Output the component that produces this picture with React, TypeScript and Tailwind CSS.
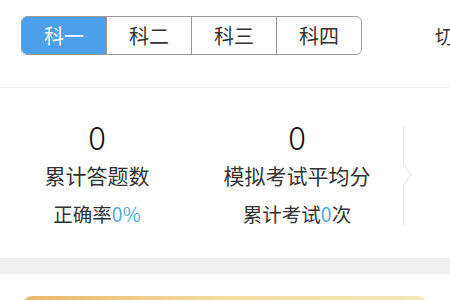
import React from "react"

const font = { fontFamily: '"Noto Sans CJK SC", "Noto Sans", sans-serif' }

const subjects = ["科一", "科二", "科三", "科四"]

function Stat({ value, label, sub, num, unit, width }: { value: string; label: string; sub: string; num: string; unit: string; width: string }) {
  return (
    <div className={`${width} flex shrink-0 flex-col items-center`}>
      <div className="text-[33px] leading-[40px] font-light text-[#111]">{value}</div>
      <div className="mt-[4px] text-[21px] leading-[30px] text-[#333]">{label}</div>
      <div className="mt-[10px] text-[19.5px] leading-[28px] text-[#333]">
        {sub}
        <span className="text-[#5aaae8]">{num}</span>
        {unit}
      </div>
    </div>
  )
}

export default function App() {
  return (
    <div className="h-[300px] w-[450px] overflow-hidden bg-white" style={font}>
      <div className="flex h-[88px] items-start border-b border-[#eeeeee] pl-[21px] pt-[16px]">
        <div className="flex h-[39px] w-[341px] shrink-0 overflow-hidden rounded-[6px] border border-[#9a9a9a]">
          {subjects.map((s, i) => (
            <div
              key={s}
              className={
                i === 0
                  ? "flex flex-1 items-center justify-center bg-[#4c9fe9] text-[20px] text-white"
                  : "flex flex-1 items-center justify-center border-l border-[#9a9a9a] text-[20px] text-[#333]"
              }
            >
              {s}
            </div>
          ))}
        </div>
        <div className="ml-[73px] shrink-0 whitespace-nowrap text-[19px] leading-[39px] text-[#333]">切换</div>
      </div>
      <div className="flex h-[170px] items-start pt-[28px]">
        <Stat width="w-[194px]" value="0" label="累计答题数" sub="正确率" num="0%" unit="" />
        <Stat width="w-[206px]" value="0" label="模拟考试平均分" sub="累计考试" num="0" unit="次" />
        <div className="relative ml-[3px] mt-[9px] h-[100px] w-[12px]">
          <svg width="12" height="100" viewBox="0 0 12 100" className="absolute left-0 top-0">
            <path d="M0.5 0 V40 L8 50 L0.5 60 V100" fill="none" stroke="#ececec" strokeWidth="1.5" />
          </svg>
        </div>
      </div>
      <div className="h-[16px] bg-[#f0f0f0]" />
      <div className="px-[22px] pt-[22px]">
        <div className="h-[40px] rounded-t-[10px] bg-gradient-to-r from-[#e9b768] via-[#f3dca0] to-[#f3e8b8]" />
      </div>
    </div>
  )
}
